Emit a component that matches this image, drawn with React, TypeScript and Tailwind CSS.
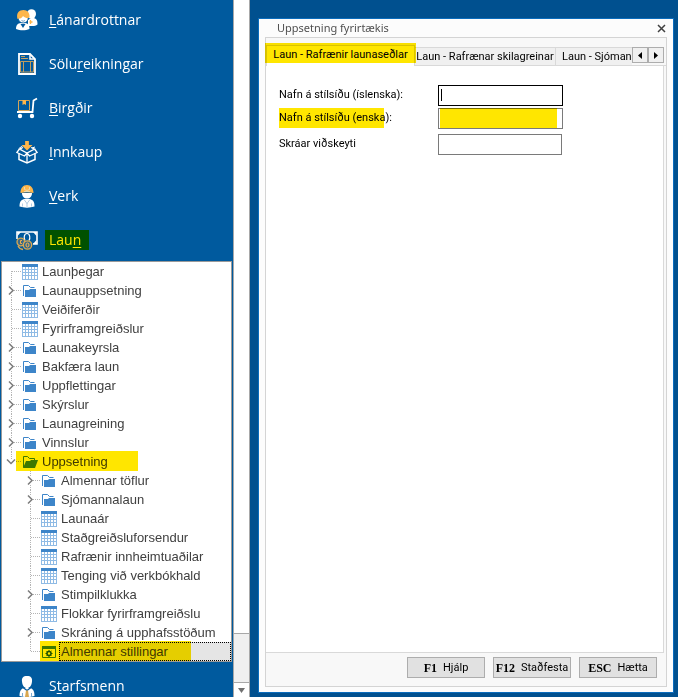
import React from 'react';

type NavItem = {
    before: string;
    hotkey: string;
    after: string;
    icon: React.ReactNode;
    marked?: boolean;
};

type TreeItem = {
    label: string;
    kind: 'table' | 'folder' | 'open' | 'settings';
    level: 0 | 1;
};

const PeopleIcon = () => (
    <svg width="22" height="22" viewBox="0 0 22 22" className="shrink-0">
        <ellipse cx="15.500" cy="5" rx="4.500" ry="4.800" fill="#fff" />
        <path d="M12 17v-6l3-2h3c2.500 1 3.500 2 3.500 6.500-1.500 1-3 1.500-5 1.500z" fill="#fff" />
        <path d="M14.500 11v4M13.500 13h3" stroke="#fdb64b" strokeWidth="1.300" />
        <path d="M0 20c0-4 1.500-5.500 5-6h4c3 .5 4.500 2 4.500 6-4 1.800-9.500 1.800-13.500 0z" fill="#fff" />
        <path d="M4.500 15L7 19l2.500-4z" fill="#00599f" />
        <circle cx="7.200" cy="9" r="5" fill="#fff" stroke="#00599f" strokeWidth=".8" />
        <path d="M1.500 10C0 4 3 1 7.500 1c4 0 6.500 3 6 7.500l-2 .5c-1.500 0-3-.5-4.500-2-1 2-2.500 2.500-4 2.500z" fill="#fdb64b" />
        <path d="M5.500 11.500q1.700 1.500 3.400 0" fill="none" stroke="#4d8cbb" strokeWidth=".8" />
    </svg>
);

const InvoiceIcon = () => (
    <svg width="22" height="22" viewBox="0 0 22 22" className="shrink-0" fill="none">
        <path d="M3 1h11l5 5v15H3z" fill="#00599f" stroke="#fff" strokeWidth="1.800" />
        <path d="M14 1v5h5" stroke="#fff" strokeWidth="1.500" />
        <path d="M5 3.500h4M5 5.500h7M7 5.500h4" stroke="#c9a563" strokeWidth=".9" />
        <path d="M4.500 8.500h13v10.500h-13zM7.500 9v10M14.500 9v10" stroke="#d3a458" strokeWidth=".9" />
    </svg>
);

const TrolleyIcon = () => (
    <svg width="22" height="22" viewBox="0 0 22 22" className="shrink-0" fill="none">
        <path d="M2.500 3.500h11v10h-11z" stroke="#d3a458" />
        <path d="M6.500 3h3.500v5L8.200 7 6.500 8z" fill="#fdb64b" />
        <path d="M1 15h15.500l1-11.500L21 1.500" stroke="#fff" strokeWidth="1.800" />
        <circle cx="4" cy="19" r="2.200" fill="#fff" />
        <circle cx="16" cy="19" r="2.200" fill="#fff" />
    </svg>
);

const BoxIcon = () => (
    <svg width="22" height="24" viewBox="0 0 22 24" className="shrink-0" fill="none">
        <path d="M3 13.500v6l8 3.500 8-3.500v-6" stroke="#fff" strokeWidth="1.500" />
        <path d="M11 13v10" stroke="#fff" strokeWidth="1.300" />
        <path d="M7 7.500L3.500 9 11 13l7.500-4L15 7.500" stroke="#fff" strokeWidth="1.300" />
        <path d="M3.500 9L.8 12.500 8.500 16l2.500-3 2.500 3 7.700-3.500L18.500 9" stroke="#fff" strokeWidth="1.300" />
        <path d="M6 9L3.500 8l3-2M16 8l3-1" stroke="#fff" />
        <path d="M9 1h4v4h3.500L11 10.500 5.500 5H9z" fill="#fdb64b" />
        <path d="M9.500 1v4M12.500 1v4" stroke="#d3a458" strokeWidth=".7" />
    </svg>
);

const WorkerIcon = () => (
    <svg width="22" height="24" viewBox="0 0 22 24" className="shrink-0">
        <path d="M3.500 22.500c0-5 1.500-6.500 4.500-7.500h6c3 1 4.500 2.500 4.500 7.500-4.500 1.500-10.500 1.500-15 0z" fill="#fff" />
        <path d="M6 9h10c0 3.500-2 5.500-5 5.500S6 12.500 6 9z" fill="#fff" />
        <path d="M4.500 9c0-5 2.500-8 6.500-8s6.500 3 6.500 8c-4-1-9-1-13 0z" fill="#fdb64b" />
        <path d="M8.500 3v2.500l2.500 1 2.500-1V3M8 7.500h6" fill="none" stroke="#e9dcb8" strokeWidth=".9" />
        <path d="M8 15.500l3 4 3-4M11 19v4M6.500 19.500v3M15.500 19.500v3" fill="none" stroke="#9fc0dc" strokeWidth=".8" />
    </svg>
);

const MoneyIcon = () => (
    <svg width="22" height="22" viewBox="0 0 22 22" className="shrink-0" fill="none">
        <path d="M1 10V3h20v12h-4" stroke="#fff" strokeWidth="1.600" />
        <path d="M1.500 3h3.500L1.500 7zM20.500 3H17l3.500 4zM20.500 15v-4L17 15z" fill="#fff" />
        <path d="M9 11.500C7.500 9 8 4.500 11 4.500s3.500 4.500 2 7" stroke="#fff" strokeWidth="1.200" />
        <circle cx="4.800" cy="13" r="3.800" fill="#386a8a" stroke="#d9a850" strokeWidth="1.300" />
        <path d="M6 11.500H4.500v3H6" stroke="#fdb64b" strokeWidth=".9" />
        <circle cx="11.500" cy="16" r="4.200" fill="#386a8a" stroke="#d9a850" strokeWidth="1.300" />
        <ellipse cx="11.500" cy="16" rx="1.500" ry="2" stroke="#fdb64b" />
        <path d="M2 17c1 2 3 3.300 5 3.500" stroke="#d9a850" strokeWidth="1.300" />
    </svg>
);

const EmployeeIcon = () => (
    <svg width="22" height="24" viewBox="0 0 22 24" className="shrink-0">
        <path d="M3.500 22c0-6 2-7.500 5-8h5c3 .5 5 2 5 8-4.500 1.500-10.500 1.500-15 0z" fill="#fff" />
        <path d="M11 2c4 0 5.500 2 5 5.500-.4 4-2 6.500-5 6.500s-4.600-2.500-5-6.500C5.500 4 7 2 11 2z" fill="#fff" />
        <path d="M7 13.500l4 3 4-3" fill="none" stroke="#00599f" strokeWidth="1.300" />
        <path d="M10 16.500h2l1 6.500H9z" fill="#d9a850" />
        <path d="M6.500 19v4M15.500 19v4" stroke="#7eabcf" />
    </svg>
);

const treeIcons = {
    table: (
        <svg width="16" height="16" viewBox="0 0 16 16" className="shrink-0" shapeRendering="crispEdges">
            <rect width="16" height="16" fill="#8fbbe5" />
            <path d="M0 0h16v3H0z" fill="#3d85c9" />
            <path
                d="M1 3h2v2H1zM4 3h2v2H4zM7 3h2v2H7zM10 3h2v2h-2zM13 3h2v2h-2zM1 6h2v2H1zM4 6h2v2H4zM7 6h2v2H7zM10 6h2v2h-2zM13 6h2v2h-2zM1 9h2v2H1zM4 9h2v2H4zM7 9h2v2H7zM10 9h2v2h-2zM13 9h2v2h-2zM1 12h2v3H1zM4 12h2v3H4zM7 12h2v3H7zM10 12h2v3h-2zM13 12h2v3h-2z"
                fill="#fff"
            />
        </svg>
    ),
    folder: (
        <svg width="16" height="16" viewBox="0 0 16 16" className="shrink-0">
            <path d="M1.500 13V2.500h5l2 2h4" fill="none" stroke="#3d85c9" />
            <path d="M3 7h4l1-1h6v8H3z" fill="#3d85c9" />
        </svg>
    ),
    open: (
        <svg width="16" height="16" viewBox="0 0 16 16" className="shrink-0">
            <path d="M1.500 13.500v-11h4l2 2h5v2" fill="none" stroke="#3d85c9" />
            <path d="M4 7h4l1-1h7l-3 8H1z" fill="#3d85c9" />
        </svg>
    ),
    settings: (
        <svg width="16" height="16" viewBox="0 0 16 16" className="shrink-0">
            <path d="M1.500 2.500h13v11h-13z" fill="#fff" stroke="#3d85c9" />
            <path d="M1 2h14v3H1z" fill="#3d85c9" />
            <circle cx="8" cy="9.500" r="2" fill="none" stroke="#1f5c94" strokeWidth="1.500" />
            <path d="M8 6v7M4.500 9.500h7M5.500 7l5 5M10.500 7l-5 5" stroke="#1f5c94" strokeDasharray="1.500 4 1.500" />
        </svg>
    ),
};

const navItems: NavItem[] = [
    { before: '', hotkey: 'L', after: 'ánardrottnar', icon: <PeopleIcon /> },
    { before: 'Sölu', hotkey: 'r', after: 'eikningar', icon: <InvoiceIcon /> },
    { before: '', hotkey: 'B', after: 'irgðir', icon: <TrolleyIcon /> },
    { before: '', hotkey: 'I', after: 'nnkaup', icon: <BoxIcon /> },
    { before: '', hotkey: 'V', after: 'erk', icon: <WorkerIcon /> },
    { before: 'Lau', hotkey: 'n', after: '', icon: <MoneyIcon />, marked: true },
];

const treeItems: TreeItem[] = [
    { label: 'Launþegar', kind: 'table', level: 0 },
    { label: 'Launauppsetning', kind: 'folder', level: 0 },
    { label: 'Veiðiferðir', kind: 'table', level: 0 },
    { label: 'Fyrirframgreiðslur', kind: 'table', level: 0 },
    { label: 'Launakeyrsla', kind: 'folder', level: 0 },
    { label: 'Bakfæra laun', kind: 'folder', level: 0 },
    { label: 'Uppflettingar', kind: 'folder', level: 0 },
    { label: 'Skýrslur', kind: 'folder', level: 0 },
    { label: 'Launagreining', kind: 'folder', level: 0 },
    { label: 'Vinnslur', kind: 'folder', level: 0 },
    { label: 'Uppsetning', kind: 'open', level: 0 },
    { label: 'Almennar töflur', kind: 'folder', level: 1 },
    { label: 'Sjómannalaun', kind: 'folder', level: 1 },
    { label: 'Launaár', kind: 'table', level: 1 },
    { label: 'Staðgreiðsluforsendur', kind: 'table', level: 1 },
    { label: 'Rafrænir innheimtuaðilar', kind: 'table', level: 1 },
    { label: 'Tenging við verkbókhald', kind: 'table', level: 1 },
    { label: 'Stimpilklukka', kind: 'folder', level: 1 },
    { label: 'Flokkar fyrirframgreiðslu', kind: 'table', level: 1 },
    { label: 'Skráning á upphafsstöðum', kind: 'folder', level: 1 },
    { label: 'Almennar stillingar', kind: 'settings', level: 1 },
];

// Yellow marker pen laid over content
const Marker = ({ className }: { className: string }) => (
    <span className={`pointer-events-none absolute bg-[#ffe600] mix-blend-multiply ${className}`} />
);

const NavButton = ({ item }: { item: NavItem }) => (
    <button className="flex h-6 w-full items-center pl-4 text-left">
        <span className="flex w-[33px] items-center">{item.icon}</span>
        <span className="relative font-['Open_Sans','Noto_Sans',sans-serif] text-[14px] leading-5 text-white">
            {item.before}
            <span className="underline underline-offset-2">{item.hotkey}</span>
            {item.after}
            {item.marked && <Marker className="-left-1 -right-2 top-0 h-5" />}
        </span>
    </button>
);

const Gutter = ({ item, first, last }: { item: TreeItem; first: boolean; last: boolean }) => (
    <svg width="19" height="19" viewBox="0 0 19 19" className="mr-px shrink-0" fill="none">
        <path d={`M9.500 ${first ? 9 : 0}V${last ? 10 : 19}`} stroke="#b4b4b4" strokeDasharray="1 1" />
        <path d="M10 9.500h9" stroke="#b4b4b4" strokeDasharray="1 1" />
        {item.kind === 'folder' && (
            <>
                <path d="M7 5h5v9H7z" fill="#fff" />
                <path d="M7 5.500l4 4-4 4" stroke="#7b7b7b" strokeWidth="1.500" />
            </>
        )}
        {item.kind === 'open' && (
            <>
                <path d="M5 7h9v5H5z" fill="#fff" />
                <path d="M5 7.500l4 4 4-4" stroke="#7b7b7b" strokeWidth="1.500" />
            </>
        )}
    </svg>
);

const TreeRow = ({ item, first, last }: { item: TreeItem; first: boolean; last: boolean }) => {
    const selected = item.kind === 'settings';
    return (
        <li className={`relative flex h-[19px] items-center ${item.level === 1 ? 'pl-[19px]' : ''}`}>
            <Gutter item={item} first={first} last={last} />
            {treeIcons[item.kind]}
            <button
                className={
                    selected
                        ? 'ml-[2px] flex h-[19px] flex-1 items-center border border-dotted border-black bg-[#e5e5e5] pl-px text-left'
                        : 'pl-1 text-left'
                }
            >
                {item.label}
            </button>
            {item.kind === 'open' && <Marker className="-top-px left-3.5 h-5 w-[122px]" />}
            {selected && <Marker className="-top-px left-[38px] h-5 w-[151px]" />}
        </li>
    );
};

const Sidebar = () => (
    <nav className="flex w-[233px] shrink-0 flex-col bg-[#005a9e]">
        <div className="flex flex-col gap-5 pt-2">
            {navItems.map((item) => (
                <NavButton key={item.hotkey} item={item} />
            ))}
        </div>
        <ul className="mx-px mt-[9px] border border-[#9a9a9a] bg-white font-['Liberation_Sans',Arial,sans-serif] text-[13px] leading-[19px] text-[#404040]">
            {treeItems.map((item, i) => (
                <TreeRow
                    key={item.label}
                    item={item}
                    first={i === 0}
                    last={i === treeItems.length - 1 || item.kind === 'open'}
                />
            ))}
        </ul>
        <div className="pt-3">
            <NavButton item={{ before: 'S', hotkey: 't', after: 'arfsmenn', icon: <EmployeeIcon /> }} />
        </div>
    </nav>
);

const ScrollBar = () => (
    <div className="flex w-[17px] shrink-0 flex-col border-x border-[#a8a8a8] bg-[#f0f0f0]">
        <div className="flex-1 border-b border-[#a8a8a8] bg-white" />
        <div className="h-12" />
        <button aria-label="Niður" className="flex h-4 items-center justify-center border-t border-[#a8a8a8] bg-white">
            <svg width="7" height="5" viewBox="0 0 7 5">
                <path d="M0 0h7L3.500 5z" fill="#707070" />
            </svg>
        </button>
    </div>
);

const Field = ({ id, label, className, marked }: { id: string; label: string; className: string; marked?: boolean }) => (
    <div className="flex h-[21px]">
        <label htmlFor={id} className="relative w-[159px] shrink-0 pt-0.5">
            {label}
            {marked && <Marker className="left-0 top-0 h-5 w-[105px]" />}
        </label>
        <span className="relative flex">
            <input id={id} type="text" className={`h-[21px] border bg-white px-1 outline-none ${className}`} />
            {marked && <Marker className="left-0.5 top-0 h-5 w-[117px]" />}
            {id === 'name-is' && <span className="absolute left-[3px] top-1 h-3 w-px bg-black" />}
        </span>
    </div>
);

const FooterButton = ({ shortcut, label }: { shortcut: string; label: string }) => (
    <button className="flex h-[21px] w-[78px] items-center justify-center gap-1.5 border border-[#adadad] bg-[#e1e1e1]">
        <b className="font-['Liberation_Serif',serif] text-[12px] leading-4">{shortcut}</b>
        <span>{label}</span>
    </button>
);

const SettingsWindow = () => (
    <section className="mb-[5px] ml-2 mr-1 mt-[18px] flex min-w-0 flex-1 flex-col border border-[#0a6cbd] bg-[#fcfcfc] px-1.5 pb-[5px] font-['Roboto','Liberation_Sans',sans-serif] text-[11px] leading-4 text-black">
        <header className="flex h-[18px] items-center justify-between pl-3 pr-px">
            <h1 className="font-['Noto_Sans','Open_Sans',sans-serif] text-[11px] text-[#505050]">Uppsetning fyrirtækis</h1>
            <button aria-label="Loka">
                <svg width="9" height="9" viewBox="0 0 9 9">
                    <path d="M1 1l7 7M8 1L1 8" stroke="#404040" strokeWidth="1.500" />
                </svg>
            </button>
        </header>
        <div className="flex flex-1 flex-col border border-[#d4d4d4] bg-[#f8f8f8]">
            <div className="flex h-7 items-end border-b border-[#d9d9d9] pt-[7px]">
                <button className="relative -mb-px h-[21px] w-[149px] shrink-0 border border-b-0 border-[#d9d9d9] bg-white pb-0.5">
                    Laun - Rafrænir launaseðlar
                    <Marker className="-left-0.5 -right-0.5 -top-[3px] h-5" />
                </button>
                <button className="h-[18px] w-[141px] shrink-0 whitespace-nowrap border-r border-t border-[#d9d9d9] bg-[#f0f0f0]">
                    Laun - Rafrænar skilagreinar
                </button>
                <button className="h-[18px] flex-1 whitespace-nowrap border-t border-[#d9d9d9] bg-[#f0f0f0] pl-1.5 text-left">
                    Laun - Sjóman
                </button>
                <div className="mb-0.5 mr-0.5 flex shrink-0">
                    <button aria-label="Fyrri flipi" className="flex h-4 w-4 items-center justify-center border border-[#adadad] bg-[#f0f0f0]">
                        <svg width="4" height="7" viewBox="0 0 4 7"><path d="M4 0v7L0 3.500z" /></svg>
                    </button>
                    <button aria-label="Næsti flipi" className="flex h-4 w-4 items-center justify-center border border-[#adadad] bg-[#f0f0f0]">
                        <svg width="4" height="7" viewBox="0 0 4 7"><path d="M0 0v7l4-3.500z" /></svg>
                    </button>
                </div>
            </div>
            <form className="mr-0.5 flex flex-1 flex-col border-b border-r border-[#d9d9d9] bg-white pl-[13px] pt-[19px]">
                <Field id="name-is" label="Nafn á stílsíðu (íslenska):" className="w-[125px] border-black" />
                <div className="mt-0.5">
                    <Field id="name-en" label="Nafn á stílsíðu (enska):" className="w-[125px] border-[#7a7a7a]" marked />
                </div>
                <div className="mt-[5px]">
                    <Field id="suffix" label="Skráar viðskeyti" className="w-[124px] border-[#7a7a7a]" />
                </div>
            </form>
            <footer className="flex justify-end gap-2 pb-2 pr-[9px] pt-1">
                <FooterButton shortcut="F1" label="Hjálp" />
                <FooterButton shortcut="F12" label="Staðfesta" />
                <FooterButton shortcut="ESC" label="Hætta" />
            </footer>
        </div>
    </section>
);

const App: React.FC = () => {
    return (
        <div className="flex min-h-screen bg-[#00508f]">
            <Sidebar />
            <ScrollBar />
            <SettingsWindow />
        </div>
    );
};

export default App;
